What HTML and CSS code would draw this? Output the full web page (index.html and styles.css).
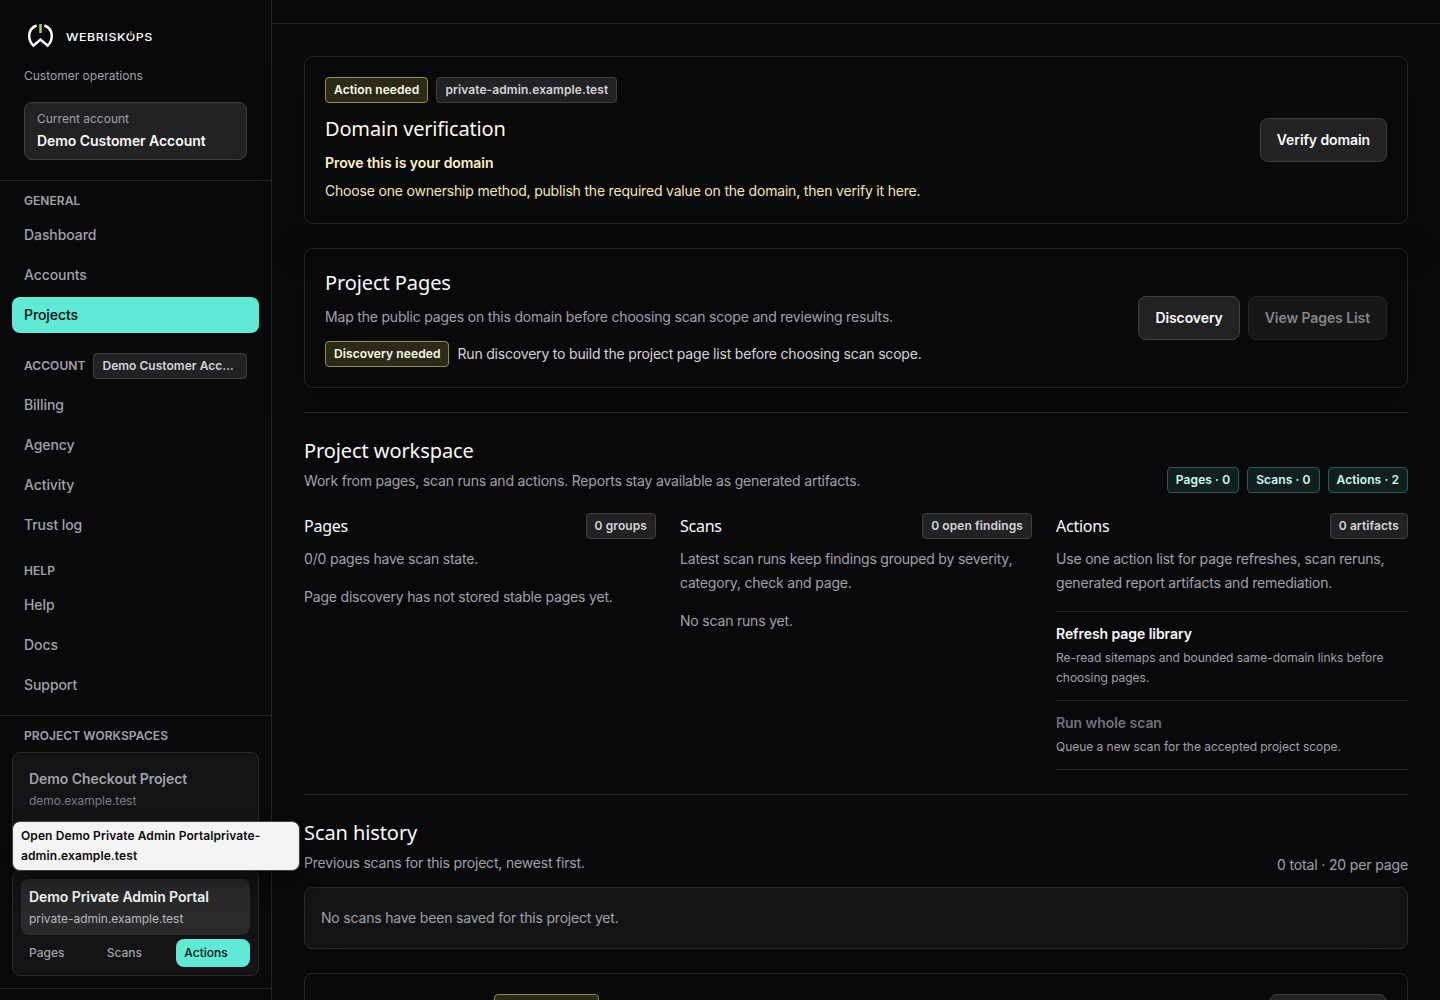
FILE: index.html
```html
<!DOCTYPE html>
<html lang="en">
<head>
    <meta charset="UTF-8">
    <meta name="viewport" content="width=device-width, initial-scale=1.0">
    <title>Demo Private Admin Portal - WebRiskOps</title>
    <link rel="stylesheet" href="styles.css">
</head>
<body>
    <div class="app">
        <aside class="sidebar">
            <div class="sidebar-header">
                <div class="brand">
                    <svg class="brand-mark" width="28" height="26" viewBox="0 0 28 26" fill="none">
                        <path d="M9.600 2.500C5 4.200 2.200 8.200 2.200 13c0 4.100 1.600 7 4.200 9.700L13.500 16.500l7.100 6.200c2.600-2.700 4.200-5.600 4.200-9.700 0-4.800-2.800-8.800-7.400-10.500" stroke="#fff" stroke-width="2.400"/>
                        <path d="M13.500 1v9" stroke="#a3e635" stroke-width="2.400"/>
                    </svg>
                    <span class="brand-name">WEBRISK<span class="brand-o">O</span>PS</span>
                </div>
                <p class="brand-sub">Customer operations</p>
                <div class="account-card">
                    <span>Current account</span>
                    <strong>Demo Customer Account</strong>
                </div>
            </div>

            <nav class="nav">
                <div class="nav-group">
                    <h2 class="nav-title">General</h2>
                    <a class="nav-link" href="#">Dashboard</a>
                    <a class="nav-link" href="#">Accounts</a>
                    <a class="nav-link active" href="#">Projects</a>
                </div>
                <div class="nav-group">
                    <div class="nav-title-row">
                        <h2 class="nav-title">Account</h2>
                        <span class="badge account-badge">Demo Customer Account</span>
                    </div>
                    <a class="nav-link" href="#">Billing</a>
                    <a class="nav-link" href="#">Agency</a>
                    <a class="nav-link" href="#">Activity</a>
                    <a class="nav-link" href="#">Trust log</a>
                </div>
                <div class="nav-group">
                    <h2 class="nav-title">Help</h2>
                    <a class="nav-link" href="#">Help</a>
                    <a class="nav-link" href="#">Docs</a>
                    <a class="nav-link" href="#">Support</a>
                </div>
            </nav>

            <div class="workspaces">
                <h2 class="nav-title">Project workspaces</h2>
                <div class="workspace">
                    <a class="workspace-link" href="#">
                        <strong>Demo Checkout Project</strong>
                        <span>demo.example.test</span>
                    </a>
                    <div class="workspace-tabs"></div>
                </div>
                <div class="workspace current">
                    <div class="tooltip">Open Demo Private Admin Portalprivate-admin.example.test</div>
                    <a class="workspace-link" href="#">
                        <strong>Demo Private Admin Portal</strong>
                        <span>private-admin.example.test</span>
                    </a>
                    <div class="workspace-tabs">
                        <a href="#">Pages</a>
                        <a href="#">Scans</a>
                        <a class="active" href="#">Actions</a>
                    </div>
                </div>
            </div>
        </aside>

        <main class="main">
            <div class="topbar"></div>
            <div class="content">
                <section class="card">
                    <div>
                        <div class="badges">
                            <span class="badge warning">Action needed</span>
                            <span class="badge">private-admin.example.test</span>
                        </div>
                        <h2 class="title verify-title">Domain verification</h2>
                        <p class="notice"><strong>Prove this is your domain</strong></p>
                        <p class="notice notice-text">Choose one ownership method, publish the required value on the domain, then verify it here.</p>
                    </div>
                    <button class="btn">Verify domain</button>
                </section>

                <section class="card">
                    <div>
                        <h2 class="title">Project Pages</h2>
                        <p class="muted card-text">Map the public pages on this domain before choosing scan scope and reviewing results.</p>
                        <div class="badges discovery">
                            <span class="badge warning">Discovery needed</span>
                            <span>Run discovery to build the project page list before choosing scan scope.</span>
                        </div>
                    </div>
                    <div class="badges">
                        <button class="btn">Discovery</button>
                        <button class="btn" disabled>View Pages List</button>
                    </div>
                </section>

                <section class="section">
                    <div class="section-header">
                        <div>
                            <h2 class="title">Project workspace</h2>
                            <p class="muted">Work from pages, scan runs and actions. Reports stay available as generated artifacts.</p>
                        </div>
                        <div class="badges">
                            <span class="badge accent">Pages · 0</span>
                            <span class="badge accent">Scans · 0</span>
                            <span class="badge accent">Actions · 2</span>
                        </div>
                    </div>
                    <div class="columns">
                        <div class="column">
                            <div class="column-header">
                                <h3>Pages</h3>
                                <span class="badge">0 groups</span>
                            </div>
                            <p class="muted">0/0 pages have scan state.</p>
                            <p class="muted">Page discovery has not stored stable pages yet.</p>
                        </div>
                        <div class="column">
                            <div class="column-header">
                                <h3>Scans</h3>
                                <span class="badge">0 open findings</span>
                            </div>
                            <p class="muted">Latest scan runs keep findings grouped by severity, category, check and page.</p>
                            <p class="muted">No scan runs yet.</p>
                        </div>
                        <div class="column">
                            <div class="column-header">
                                <h3>Actions</h3>
                                <span class="badge">0 artifacts</span>
                            </div>
                            <p class="muted">Use one action list for page refreshes, scan reruns, generated report artifacts and remediation.</p>
                            <ul class="actions">
                                <li>
                                    <strong>Refresh page library</strong>
                                    <span>Re-read sitemaps and bounded same-domain links before choosing pages.</span>
                                </li>
                                <li class="disabled">
                                    <strong>Run whole scan</strong>
                                    <span>Queue a new scan for the accepted project scope.</span>
                                </li>
                            </ul>
                        </div>
                    </div>
                </section>

                <section class="section history">
                    <div class="section-header">
                        <div>
                            <h2 class="title">Scan history</h2>
                            <p class="muted">Previous scans for this project, newest first.</p>
                        </div>
                        <span class="total">0 total · 20 per page</span>
                    </div>
                    <div class="empty">No scans have been saved for this project yet.</div>
                </section>

                <section class="card next-card">
                    <div class="badges">
                        <span class="badge warning next-badge"></span>
                    </div>
                    <button class="btn next-btn"></button>
                </section>
            </div>
        </main>
    </div>
</body>
</html>
```
FILE: styles.css
```css
* {
    box-sizing: border-box;
}
body {
    margin: 0;
    background: #09090b;
    color: #d4d4d8;
    font-family: Inter, sans-serif;
    font-size: 14px;
    line-height: 24px;
    letter-spacing: -0.19px;
}
h2, h3, p, ul {
    margin: 0;
    padding: 0;
}
a {
    color: inherit;
    text-decoration: none;
}
strong {
    font-weight: 600;
    letter-spacing: -0.06px;
}
.app {
    display: flex;
    height: 1000px;
    overflow: hidden;
}

/* Sidebar */
.sidebar {
    width: 272px;
    flex-shrink: 0;
    border-right: 1px solid #252527;
    letter-spacing: 0;
}
.sidebar-header {
    height: 181px;
    padding: 23px 24px 20px;
    border-bottom: 1px solid #252527;
}
.brand {
    display: flex;
    align-items: center;
    height: 26px;
    padding-left: 3px;
    color: #fff;
}
.brand-name {
    margin: 2px 0 0 11px;
    font-size: 11px;
    font-weight: 500;
    letter-spacing: 0.5px;
    transform: scaleX(1.13);
    transform-origin: left;
}
.brand-o {
    position: relative;
}
.brand-o::after {
    content: "";
    position: absolute;
    top: 1px;
    left: 4px;
    width: 1px;
    height: 5px;
    background: #a3e635;
    box-shadow: 0 0 0 1px #09090b;
}
.brand-sub {
    margin-top: 17px;
    color: #a1a1aa;
    font-size: 12px;
    line-height: 20px;
}
.account-card {
    display: flex;
    flex-direction: column;
    height: 58px;
    margin-top: 16px;
    padding: 6px 12px;
    background: #222224;
    border: 1px solid #404042;
    border-radius: 8px;
}
.account-card span {
    color: #a1a1aa;
    font-size: 12px;
    line-height: 20px;
}
.account-card strong {
    color: #fafafa;
}
.nav {
    padding: 8px 12px 12px;
    border-bottom: 1px solid #252527;
}
.nav-group {
    display: flex;
    flex-direction: column;
    gap: 4px;
    margin-bottom: 16px;
}
.nav-group:last-child {
    margin-bottom: 0;
}
.nav-title {
    padding: 0 12px;
    color: #a1a1aa;
    font-size: 12px;
    font-weight: 600;
    line-height: 24px;
    letter-spacing: 0.06px;
    text-transform: uppercase;
}
.nav-title-row {
    display: flex;
    align-items: center;
    gap: 8px;
    margin: 4px 12px;
}
.nav-title-row .nav-title {
    padding: 0;
}
.nav-link {
    height: 36px;
    padding: 6px 12px;
    border-radius: 8px;
    color: #a1a1aa;
    font-weight: 500;
    letter-spacing: -0.08px;
}
.nav-link.active {
    background: #5eead4;
    color: #09090b;
}
.workspaces {
    height: 273px;
    padding: 8px 12px 0;
    border-bottom: 1px solid #252527;
}
.workspace {
    position: relative;
    height: 106px;
    margin: 4px 0 12px;
    padding: 8px;
    background: #131315;
    border: 1px solid #29292b;
    border-radius: 8px;
    color: #a1a1aa;
}
.workspace.current {
    margin: 0;
}
.workspace-link {
    display: flex;
    flex-direction: column;
    height: 56px;
    padding: 6px 8px;
    border-radius: 8px;
}
.workspace-link span {
    color: #7c7c84;
    font-size: 12px;
    line-height: 20px;
    letter-spacing: -0.03px;
}
.current .workspace-link {
    background: #2a2a2c;
    color: #fafafa;
}
.current .workspace-link span {
    color: #b9b9bf;
}
.workspace-tabs {
    display: grid;
    grid-template-columns: repeat(3, 1fr);
    gap: 4px;
    min-height: 28px;
    margin-top: 4px;
    font-size: 12px;
    font-weight: 500;
    line-height: 28px;
}
.workspace-tabs a {
    padding: 0 8px;
    border-radius: 8px;
}
.workspace-tabs .active {
    background: #5eead4;
    color: #09090b;
}
.tooltip {
    position: absolute;
    z-index: 5;
    bottom: 104px;
    left: -1px;
    width: 288px;
    height: 50px;
    padding: 4px 8px;
    background: #f4f4f5;
    border: 1px solid #3f3f46;
    border-radius: 8px;
    box-shadow: 0 12px 24px rgba(0,0,0,0.35);
    color: #09090b;
    font-size: 12px;
    font-weight: 600;
    line-height: 20px;
    letter-spacing: 0.1px;
}

/* Main */
.main {
    flex: 1;
    min-width: 0;
}
.topbar {
    height: 24px;
    border-bottom: 1px solid #252527;
}
.content {
    display: flex;
    flex-direction: column;
    gap: 24px;
    padding: 32px;
}
.card {
    display: flex;
    align-items: center;
    justify-content: space-between;
    padding: 20px;
    border: 1px solid #242426;
    border-radius: 8px;
    box-shadow: 0 16px 40px rgba(0,0,0,0.25);
}
.title, .column h3 {
    color: #fafafa;
    font-family: "Noto Sans", sans-serif;
    font-weight: 400;
}
.title {
    font-size: 20px;
    line-height: 28px;
    letter-spacing: -0.09px;
}
.verify-title {
    margin-top: 12px;
    color: #fefce8;
    letter-spacing: -0.17px;
}
.notice {
    margin-top: 8px;
    color: #fef3c0;
}
.notice-text {
    margin-top: 4px;
    color: #f3e8b2;
}
.muted {
    color: #a1a1aa;
}
.card-text {
    margin-top: 8px;
}
.badges {
    display: flex;
    align-items: center;
    gap: 8px;
}
.discovery {
    margin-top: 12px;
}
.badge {
    height: 26px;
    padding: 0 8px;
    background: #222224;
    border: 1px solid #404042;
    border-radius: 4px;
    color: #d4d4d8;
    font-size: 12px;
    font-weight: 600;
    line-height: 24px;
    letter-spacing: 0.09px;
    white-space: nowrap;
}
.account-badge {
    width: 154px;
    overflow: hidden;
    letter-spacing: 0.03px;
    text-overflow: ellipsis;
}
.warning {
    background: #2b2a18;
    border-color: #8f912b;
    color: #fefce8;
}
.accent {
    background: #10201f;
    border-color: #205e56;
    color: #ccfbf1;
}
.btn {
    height: 44px;
    padding: 0 16px;
    background: #222224;
    border: 1px solid #404042;
    border-radius: 8px;
    color: #fafafa;
    font: 600 14px/24px Inter, sans-serif;
    letter-spacing: -0.09px;
}
.btn:disabled {
    background: #161617;
    border-color: #252527;
    color: #85858a;
}
.section {
    padding-top: 24px;
    border-top: 1px solid #252527;
}
.section-header {
    display: flex;
    align-items: flex-end;
    justify-content: space-between;
}
.section-header .muted {
    margin-top: 4px;
}
.columns {
    display: grid;
    grid-template-columns: repeat(3, 1fr);
    gap: 24px;
    margin-top: 20px;
}
.column-header {
    display: flex;
    align-items: center;
    justify-content: space-between;
    margin-bottom: 8px;
}
.column h3 {
    font-size: 16px;
    line-height: 24px;
    letter-spacing: -0.25px;
}
.column p + p {
    margin-top: 14px;
}
.actions {
    margin-top: 16px;
    border-bottom: 1px solid #252527;
    list-style: none;
}
.actions li {
    padding: 10px 0 12px;
    border-top: 1px solid #252527;
}
.actions strong {
    display: block;
    color: #fafafa;
}
.actions span {
    display: block;
    margin-top: 2px;
    color: #a1a1aa;
    font-size: 12px;
    line-height: 20px;
    letter-spacing: -0.03px;
}
.actions .disabled strong {
    color: #71717a;
}
.total {
    padding-top: 4px;
    margin-bottom: -2px;
    color: #a1a1aa;
    letter-spacing: -0.14px;
}
.empty {
    margin-top: 12px;
    padding: 18px 16px;
    background: #131315;
    border: 1px solid #29292b;
    border-radius: 8px;
    color: #a1a1aa;
}
.next-card {
    align-items: flex-start;
}
.next-badge {
    width: 105px;
    margin-left: 169px;
}
.next-btn {
    width: 118px;
}
```
